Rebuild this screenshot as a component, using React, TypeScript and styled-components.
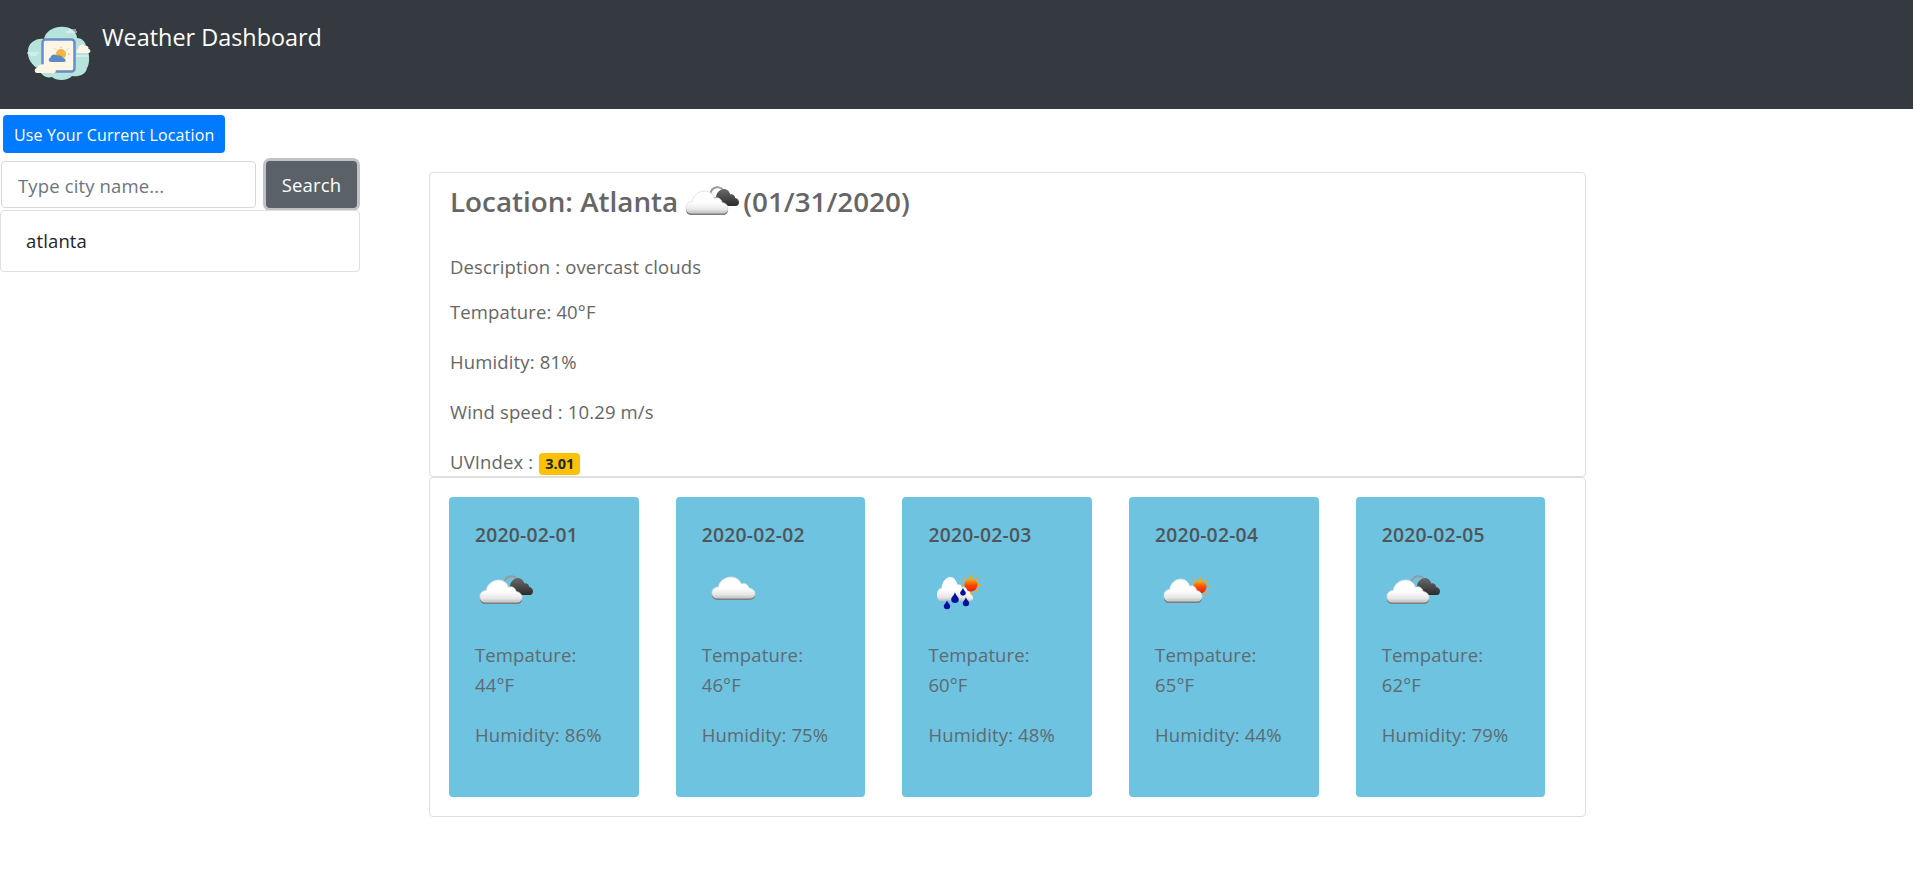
import React from 'react'
import styled, { createGlobalStyle } from 'styled-components'

const GlobalStyle = createGlobalStyle`
  html, body {
    margin: 0;
    background: #fff;
    font-family: 'Open Sans', 'Noto Sans', Arial, sans-serif;
    font-size: 18.5px;
    line-height: 24px;
    letter-spacing: 0.14px;
    color: #666;
  }
  * { box-sizing: border-box; }
`

const Navbar = styled.header`
  display: flex;
  align-items: flex-start;
  height: 109px;
  padding: 24px 0 0 24px;
  background: #343a40;
`

const LogoSvg = styled.svg`
  flex: none;
`

const Brand = styled.span`
  margin: -8px 0 0 8px;
  font-size: 23.4px;
  line-height: 42px;
  letter-spacing: 0;
  color: #fff;
`

const Layout = styled.div`
  display: grid;
  grid-template-columns: 360px 1157px;
  column-gap: 69px;
`

const Sidebar = styled.aside`
  display: flex;
  flex-direction: column;
  align-items: flex-start;
`

const LocationButton = styled.button`
  height: 38px;
  margin: 6px 0 8px 3px;
  padding: 1px 11px 0;
  border: 0;
  border-radius: 4px;
  background: #007bff;
  color: #fff;
  font: inherit;
  font-size: 16px;
  letter-spacing: 0.14px;
`

const SearchForm = styled.form`
  display: flex;
  justify-content: space-between;
  width: 356px;
  margin-left: 1px;
`

const CityInput = styled.input`
  width: 255px;
  height: 47px;
  padding: 1px 16px 0;
  border: 1px solid #d6d9dc;
  border-radius: 4px;
  font: inherit;
  letter-spacing: inherit;
  color: #495057;
  &::placeholder { color: #6c757d; opacity: 1; }
`

const SearchButton = styled.button`
  width: 91px;
  height: 47px;
  padding: 1px 0 0;
  border: 0;
  border-radius: 4px;
  background: #5a6268;
  box-shadow: 0 0 0 3px #bfc3c7;
  color: #fff;
  font: inherit;
  letter-spacing: inherit;
`

const CityList = styled.ul`
  width: 360px;
  height: 62px;
  margin: 2px 0 0;
  padding: 0 25px;
  list-style: none;
  display: flex;
  align-items: center;
  border: 1px solid #dedfe0;
  border-radius: 4px;
  color: #212529;
`

const Main = styled.main`
  display: flex;
  flex-direction: column;
  padding-top: 63px;
`

const Panel = styled.section`
  border: 1px solid #dfdfdf;
  border-radius: 4px;
`

const CurrentPanel = styled(Panel)`
  height: 305px;
  padding: 3px 20px 0;
  overflow: hidden;
`

const Title = styled.h2`
  display: flex;
  align-items: center;
  height: 50px;
  margin: 0 0 29px;
  font-size: 27.8px;
  font-weight: 600;
  letter-spacing: 0;
  color: #666;
  white-space: pre;
`

const TitleIcon = styled.span`
  margin: 0 2px 0 3px;
`

const Line = styled.p<{ $gap: number }>`
  margin: 0 0 ${props => props.$gap}px;
`

const Badge = styled.span`
  display: inline-block;
  margin-left: 1px;
  padding: 0 6px;
  border-radius: 4px;
  background: #ffc107;
  color: #212529;
  font-size: 14.5px;
  line-height: 22px;
  font-weight: 700;
  letter-spacing: 0;
`

const ForecastPanel = styled(Panel)`
  display: flex;
  gap: 37.2px;
  height: 340px;
  padding: 19px 19px;
`

const DayCard = styled.article`
  display: flex;
  flex-direction: column;
  width: 189.5px;
  height: 300px;
  padding: 26px 26px 0;
  border-radius: 4px;
  background: #6dc3e0;
  color: #5f6a70;
`

const DayDate = styled.h5`
  margin: 0 0 18px;
  font-size: 19.3px;
  line-height: 24px;
  font-weight: 600;
  letter-spacing: 0.25px;
  color: #505558;
`

const DayText = styled.p<{ $gap: number }>`
  margin: 0 0 ${props => props.$gap}px;
  line-height: 30px;
`

const IconHolder = styled.div`
  height: 62px;
  margin-bottom: 13px;
`

const IconSvg = styled.svg`
  display: block;
`

type IconKind = 'overcast' | 'cloud' | 'rain' | 'partly'

const CLOUD = 'M13 55 C3 55 0 47 0 41 C0 32 7 26 15 26 C16 12 30 0 44 0 C56 0 65 8 68 18 C74 15 84 18 86 29 C94 30 100 36 100 43 C100 50 95 55 88 55 Z'

function Cloud(props: { x: number; y: number; w: number; h: number; fill: string; shade?: string; edge?: boolean }) {
  const sx = props.w / 100
  const sy = props.h / 55
  return (
    <g transform={`translate(${props.x} ${props.y}) scale(${sx} ${sy})`}>
      {props.shade && <path d={CLOUD} fill={props.shade} transform="translate(0 5)" />}
      <path
        d={CLOUD}
        fill={props.fill}
        stroke={props.edge ? '#dcdcdc' : 'none'}
        strokeWidth="0.8"
        vectorEffect="non-scaling-stroke"
      />
    </g>
  )
}

function Sun(props: { cx: number; cy: number }) {
  const rays = [0, 45, 90, 135, 180, 225, 270, 315]
  return (
    <g>
      {rays.map(angle => (
        <polygon
          key={angle}
          points="-1.8,-7 1.8,-7 0,-11"
          fill="#f9a61e"
          transform={`translate(${props.cx} ${props.cy}) rotate(${angle})`}
        />
      ))}
      <circle cx={props.cx} cy={props.cy} r="6.5" fill="url(#sunFill)" />
    </g>
  )
}

function Drop(props: { x: number; y: number; s: number }) {
  return (
    <path
      d={`M${props.x} ${props.y - props.s * 1.5} C${props.x + props.s * 0.4} ${props.y - props.s * 0.4} ${props.x + props.s} ${props.y - props.s * 0.2} ${props.x + props.s} ${props.y + props.s * 0.3} A${props.s} ${props.s} 0 0 1 ${props.x - props.s} ${props.y + props.s * 0.3} C${props.x - props.s} ${props.y - props.s * 0.2} ${props.x - props.s * 0.4} ${props.y - props.s * 0.4} ${props.x} ${props.y - props.s * 1.5} Z`}
      fill="#00109a"
    />
  )
}

function WeatherIcon(props: { kind: IconKind }) {
  return (
    <IconSvg width="60" height="50" viewBox="0 0 60 50">
      <defs>
        <linearGradient id="whiteCloud" x1="0" y1="0" x2="0" y2="1">
          <stop offset="0" stopColor="#ffffff" />
          <stop offset="0.55" stopColor="#fdfdfd" />
          <stop offset="0.85" stopColor="#e6e6e6" />
          <stop offset="1" stopColor="#bdbdbd" />
        </linearGradient>
        <linearGradient id="darkCloud" x1="0" y1="0" x2="0" y2="1">
          <stop offset="0" stopColor="#6a6a6a" />
          <stop offset="1" stopColor="#2b2b2b" />
        </linearGradient>
        <linearGradient id="sunFill" x1="0" y1="0" x2="0" y2="1">
          <stop offset="0" stopColor="#ffb400" />
          <stop offset="0.5" stopColor="#ff4a00" />
          <stop offset="1" stopColor="#f01a00" />
        </linearGradient>
      </defs>
      {props.kind === 'overcast' && (
        <g>
          <path d="M30 21 A7 7 0 0 1 42 14" fill="none" stroke="#9a9a9a" strokeWidth="2" />
          <Cloud x={31} y={13} w={27} h={17} fill="url(#darkCloud)" />
          <Cloud x={5} y={15} w={42} h={22} fill="url(#whiteCloud)" shade="#7d7d7d" edge />
        </g>
      )}
      {props.kind === 'cloud' && (
        <Cloud x={10} y={12} w={43} h={21} fill="url(#whiteCloud)" shade="#7d7d7d" edge />
      )}
      {props.kind === 'partly' && (
        <g>
          <Sun cx={45} cy={22} />
          <Cloud x={9} y={14} w={38} h={22} fill="url(#whiteCloud)" shade="#7d7d7d" edge />
        </g>
      )}
      {props.kind === 'rain' && (
        <g>
          <Sun cx={43} cy={20} />
          <Cloud x={28} y={22} w={17} h={14} fill="url(#whiteCloud)" />
          <Cloud x={9} y={12} w={30} h={24} fill="url(#whiteCloud)" />
          <Drop x={19} y={40} s={3.2} />
          <Drop x={27} y={33} s={3.8} />
          <Drop x={35} y={27} s={2.8} />
          <Drop x={38} y={37} s={3.2} />
        </g>
      )}
    </IconSvg>
  )
}

function AppLogo() {
  return (
    <LogoSvg width="70" height="60" viewBox="0 0 70 60">
      <path
        d="M20 15 C22 6 32 2 40 3 C48 3 53 9 53 14 C58 14 62 18 62 23 C66 28 66 40 63 44 C62 51 54 53 48 52 C44 57 32 57 28 53 C22 55 16 50 15 45 C8 42 3 34 4 27 C4 19 12 14 20 15 Z"
        fill="#b6e3dc"
      />
      <rect x="18.5" y="15.5" width="32" height="32" rx="3" fill="#fdf6e6" stroke="#6b8cc4" strokeWidth="2.5" />
      <circle cx="37" cy="30" r="5" fill="#f2b544" />
      <path d="M37 22.5 V24 M44 24.5 L43 25.5 M45.5 30 H44 M31 24.5 L32 25.5" stroke="#d9a03a" strokeWidth="0.8" />
      <path
        d="M27 38 C24.5 38 24 34.5 26.5 33.5 C27 30.5 31 29.5 33 31.5 C35.5 30.5 38.5 32 38.5 34 C41 34 42 36 41.5 37 C41 38 40 38 39 38 Z"
        fill="#5b8ac8"
      />
      <path
        d="M13 49 C10 49 10 44 13 44 C14 40 20 39 22 42 C25 40.5 29 42 29 44.5 C32 44.5 33 49 30 49 Z"
        fill="#fdf6e6"
      />
      <path
        d="M54 29 C52 29 52 25 54 25 C54.5 21 59 19 61 22 C63 21 65 23 64.5 25 C67 25 67 29 64.5 29 Z"
        fill="#fdf6e6"
      />
      <path d="M42 8 H53 M45 6 H52 M3 29 H15 M6 31 H13 M52 32 H64" stroke="#eef5f2" strokeWidth="1" />
    </LogoSvg>
  )
}

const forecast: { date: string; kind: IconKind; temp: string; humidity: string }[] = [
  { date: '2020-02-01', kind: 'overcast', temp: '44°F', humidity: '86%' },
  { date: '2020-02-02', kind: 'cloud', temp: '46°F', humidity: '75%' },
  { date: '2020-02-03', kind: 'rain', temp: '60°F', humidity: '48%' },
  { date: '2020-02-04', kind: 'partly', temp: '65°F', humidity: '44%' },
  { date: '2020-02-05', kind: 'overcast', temp: '62°F', humidity: '79%' },
]

export default function App() {
  return (
    <>
      <GlobalStyle />
      <Navbar>
        <AppLogo />
        <Brand>Weather Dashboard</Brand>
      </Navbar>
      <Layout>
        <Sidebar>
          <LocationButton type="button">Use Your Current Location</LocationButton>
          <SearchForm onSubmit={event => event.preventDefault()}>
            <CityInput placeholder="Type city name..." />
            <SearchButton type="submit">Search</SearchButton>
          </SearchForm>
          <CityList>
            <li>atlanta</li>
          </CityList>
        </Sidebar>
        <Main>
          <CurrentPanel>
            <Title>
              Location: Atlanta
              <TitleIcon>
                <WeatherIcon kind="overcast" />
              </TitleIcon>
              (01/31/2020)
            </Title>
            <Line $gap={21}>Description : overcast clouds</Line>
            <Line $gap={26}>Tempature: 40°F</Line>
            <Line $gap={26}>Humidity: 81%</Line>
            <Line $gap={26}>Wind speed : 10.29 m/s</Line>
            <Line $gap={0}>
              UVIndex : <Badge>3.01</Badge>
            </Line>
          </CurrentPanel>
          <ForecastPanel>
            {forecast.map(day => (
              <DayCard key={day.date}>
                <DayDate>{day.date}</DayDate>
                <IconHolder>
                  <WeatherIcon kind={day.kind} />
                </IconHolder>
                <DayText $gap={0}>Tempature:</DayText>
                <DayText $gap={20}>{day.temp}</DayText>
                <DayText $gap={0}>Humidity: {day.humidity}</DayText>
              </DayCard>
            ))}
          </ForecastPanel>
        </Main>
      </Layout>
    </>
  )
}
